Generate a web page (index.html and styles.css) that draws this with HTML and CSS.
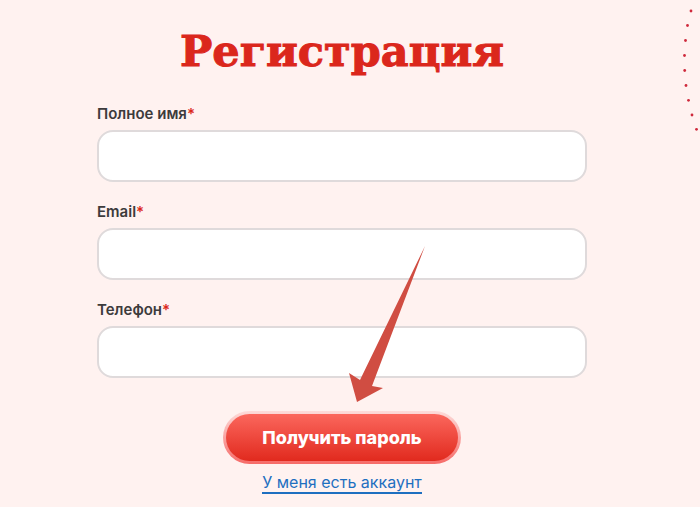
FILE: index.html
```html
<!DOCTYPE html>
<html lang="ru">
  <head>
    <meta charset="utf-8">
    <meta name="viewport" content="width=device-width, initial-scale=1">
    <title>Регистрация</title>
    <link rel="stylesheet" href="styles.css">
  </head>
  <body>
    <svg class="dots" width="20" height="140" viewBox="0 0 20 140" aria-hidden="true">
      <circle cx="11" cy="11" r="1.4" />
      <circle cx="7.5" cy="25.5" r="1.4" />
      <circle cx="5.5" cy="40.5" r="1.4" />
      <circle cx="4.5" cy="55.5" r="1.4" />
      <circle cx="4.7" cy="70.5" r="1.4" />
      <circle cx="6" cy="85.5" r="1.4" />
      <circle cx="8.5" cy="100.3" r="1.4" />
      <circle cx="12" cy="115" r="1.4" />
      <circle cx="16.5" cy="129.3" r="1.4" />
    </svg>
    <main class="page">
      <h1 class="title">Регистрация</h1>
      <form class="form">
        <div class="field">
          <label class="label" for="name">Полное имя<span class="required">*</span></label>
          <input class="input" id="name" type="text" required>
        </div>
        <div class="field">
          <label class="label" for="email">Email<span class="required">*</span></label>
          <input class="input" id="email" type="email" required>
        </div>
        <div class="field">
          <label class="label" for="phone">Телефон<span class="required">*</span></label>
          <input class="input" id="phone" type="tel" required>
        </div>
        <div class="actions">
          <button class="submit" type="submit">Получить пароль</button>
          <a class="login-link" href="#">У меня есть аккаунт</a>
          <svg class="arrow" width="86" height="160" viewBox="-6 0 86 160" aria-hidden="true">
            <path d="M77 1 L24 141 L35 143 L9 157 L1 128 L12 135 Z" />
          </svg>
        </div>
      </form>
    </main>
  </body>
</html>
```
FILE: styles.css
```css
* {
  box-sizing: border-box;
}
body {
  margin: 0;
  background-color: #fff2f0;
  color: #3d3b3c;
  font-family: Inter, "Liberation Sans", sans-serif;
}
.page {
  padding: 23px 113px 12px 97px;
}
.title {
  margin: 0 0 26px;
  color: #db271c;
  font-family: "DejaVu Serif", serif;
  font-size: 43px;
  font-weight: 700;
  line-height: 56px;
  text-align: center;
  -webkit-text-stroke: 1px #db271c;
}
.form {
  display: flex;
  flex-direction: column;
  gap: 21px;
}
.field {
  display: flex;
  flex-direction: column;
  gap: 7px;
}
.label {
  font-size: 15px;
  font-weight: 600;
  line-height: 18px;
}
.required {
  color: #db271c;
}
.input {
  width: 100%;
  height: 52px;
  padding: 0 16px;
  border: 2px solid #dfdadb;
  border-radius: 16px;
  background-color: white;
  font: inherit;
}
.actions {
  position: relative;
  display: flex;
  flex-direction: column;
  align-items: center;
  gap: 8px;
  padding-top: 12px;
}
.submit {
  height: 53px;
  padding: 0 36px;
  border: 3px solid transparent;
  border-radius: 27px;
  background:
    linear-gradient(#fb675d, #e12a1e) padding-box,
    linear-gradient(#fddcda, #f66b68) border-box;
  color: white;
  font-family: inherit;
  font-size: 18px;
  font-weight: 800;
}
.login-link {
  border-bottom: 2px solid #1e6fc0;
  color: #1e6fc0;
  font-size: 16px;
  line-height: 20px;
  text-decoration: none;
}
.dots {
  position: absolute;
  top: 0;
  right: 0;
  fill: #cf2a3c;
}
.arrow {
  position: absolute;
  bottom: 89px;
  left: 50%;
  fill: #d04d42;
  pointer-events: none;
}
```
